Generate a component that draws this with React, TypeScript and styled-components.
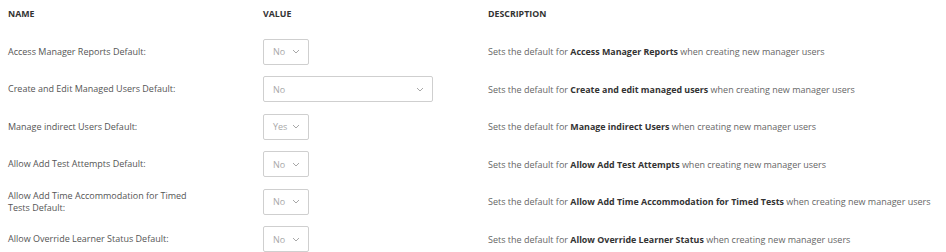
import styled, { createGlobalStyle } from 'styled-components';

const GlobalStyle = createGlobalStyle`
  body {
    margin: 0;
    background: #fff;
    font-family: "Open Sans", "Liberation Sans", sans-serif;
  }
`;

type Setting = {
  name: string;
  value: string;
  wide?: boolean;
  label: string;
};

const settings: Setting[] = [
  { name: 'Access Manager Reports Default:', value: 'No', label: 'Access Manager Reports' },
  { name: 'Create and Edit Managed Users Default:', value: 'No', wide: true, label: 'Create and edit managed users' },
  { name: 'Manage indirect Users Default:', value: 'Yes', label: 'Manage indirect Users' },
  { name: 'Allow Add Test Attempts Default:', value: 'No', label: 'Allow Add Test Attempts' },
  {
    name: 'Allow Add Time Accommodation for Timed Tests Default:',
    value: 'No',
    label: 'Allow Add Time Accommodation for Timed Tests',
  },
  { name: 'Allow Override Learner Status Default:', value: 'No', label: 'Allow Override Learner Status' },
];

const Chevron = () => (
  <svg width="8" height="5" viewBox="0 0 8 5" fill="none">
    <path d="M1 1l3 3 3-3" stroke="#a8a8a8" strokeWidth="1" />
  </svg>
);

const App = (): JSX.Element => (
  <>
    <GlobalStyle />
    <Table>
      <HeadRow>
        <HeadCell>Name</HeadCell>
        <HeadCell>Value</HeadCell>
        <HeadCell>Description</HeadCell>
      </HeadRow>
      {settings.map((s) => (
        <Row key={s.name}>
          <NameCell>{s.name}</NameCell>
          <div>
            <Select wide={s.wide}>
              <span>{s.value}</span>
              <Chevron />
            </Select>
          </div>
          <DescCell>
            Sets the default for <strong>{s.label}</strong> when creating new manager users
          </DescCell>
        </Row>
      ))}
    </Table>
  </>
);

export default App;

const Table = styled.div`
  padding: 0 0 0 8px;
  width: 946px;
  box-sizing: border-box;
`;

const HeadRow = styled.div`
  display: grid;
  grid-template-columns: 255px 225px 1fr;
  height: 33px;
  align-items: center;
  padding-bottom: 6px;
  box-sizing: border-box;
`;

const HeadCell = styled.div`
  font-size: 8.8px;
  font-weight: 700;
  text-transform: uppercase;
  color: #333;
`;

const Row = styled.div`
  display: grid;
  grid-template-columns: 255px 225px 1fr;
  height: 37.5px;
  align-items: center;
`;

const NameCell = styled.div`
  font-size: 9px;
  line-height: 12px;
  color: #555;
  padding-right: 60px;
`;

interface SelectProps {
  readonly wide?: boolean;
}

const Select = styled.div<SelectProps>`
  display: inline-flex;
  align-items: center;
  justify-content: space-between;
  box-sizing: border-box;
  width: ${(p): string => (p.wide ? '170px' : '46px')};
  height: 26px;
  padding: 0 8px 0 9px;
  border: 1px solid #cfcfcf;
  border-radius: 2px;
  font-size: 9px;
  color: #a8a8a8;
  vertical-align: middle;
`;

const DescCell = styled.div`
  font-size: 9px;
  color: #666;
  white-space: nowrap;

  strong {
    font-weight: 700;
    font-size: 8.9px;
    color: #333;
  }
`;
